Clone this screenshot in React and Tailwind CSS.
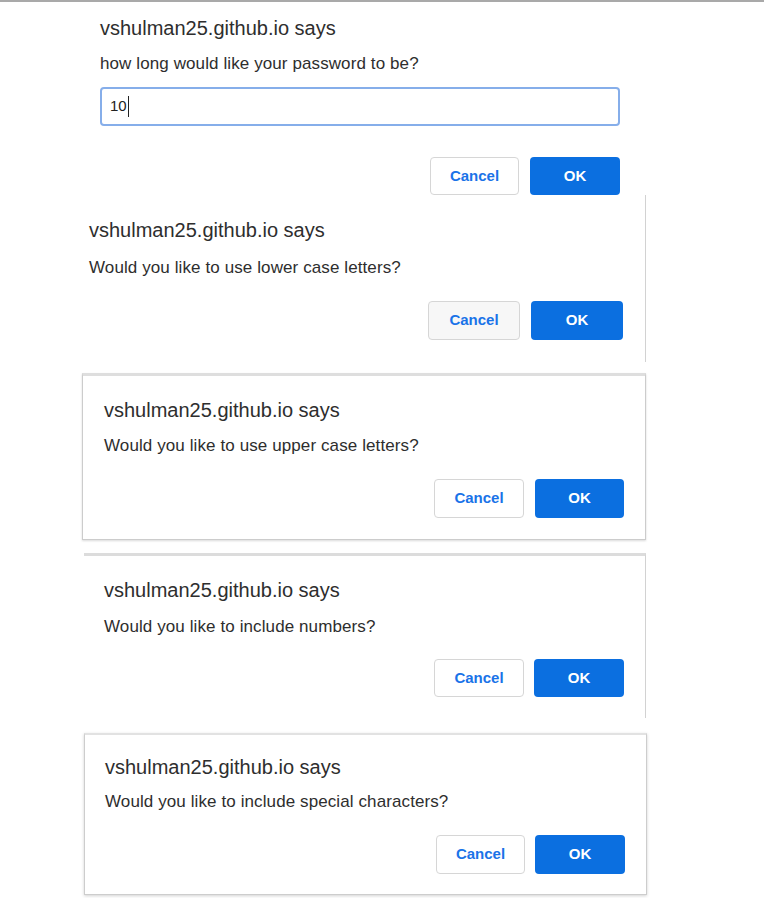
const prompts = [
  {
    box: 'ml-[60px] w-[586px] h-[167px] border-r border-r-[#d2d2d2] pl-[29px] pr-[22px] pt-[23px]',
    message: 'Would you like to use lower case letters?',
    msgGap: 'mt-[16px]',
    btnTop: 'mt-[23px]',
    btnGap: 'gap-[11px]',
    cancel: 'w-[92px] h-[39px] bg-[#f7f7f7]',
    ok: 'w-[92px] h-[39px]',
  },
  {
    box: 'mt-[11px] ml-[82px] w-[564px] h-[167px] border border-[#cccccc] border-t-[3px] border-t-[#dedede] pl-[21px] pr-[21px] pt-[22px] shadow-[0_1px_2px_rgba(0,0,0,0.15)]',
    message: 'Would you like to use upper case letters?',
    msgGap: 'mt-[14px]',
    btnTop: 'mt-[23px]',
    btnGap: 'gap-[11px]',
    cancel: 'w-[90px] h-[39px] bg-white',
    ok: 'w-[89px] h-[39px]',
  },
  {
    box: 'mt-[13px] ml-[84px] w-[562px] h-[165px] border-t-[3px] border-t-[#dcdcdc] border-r border-r-[#d2d2d2] pl-[20px] pr-[21px] pt-[22px]',
    message: 'Would you like to include numbers?',
    msgGap: 'mt-[15px]',
    btnTop: 'mt-[22px]',
    btnGap: 'gap-[10px]',
    cancel: 'w-[90px] h-[38px] bg-white',
    ok: 'w-[90px] h-[38px]',
  },
  {
    box: 'mt-[15px] ml-[84px] w-[563px] h-[162px] border border-[#cdcdcd] border-t-2 border-t-[#e2e2e2] pl-[20px] pr-[21px] pt-[20px] shadow-[0_1px_3px_rgba(0,0,0,0.18)]',
    message: 'Would you like to include special characters?',
    msgGap: 'mt-[13px]',
    btnTop: 'mt-[23px]',
    btnGap: 'gap-[10px]',
    cancel: 'w-[89px] h-[39px] bg-white',
    ok: 'w-[90px] h-[39px]',
  },
]

function Buttons({ gap, cancel, ok }) {
  return (
    <div className={`flex justify-end ${gap}`}>
      <button
        className={`${cancel} rounded-[4px] border border-[#d6d6d6] text-[15px] font-bold text-[#1a73e8]`}
      >
        Cancel
      </button>
      <button className={`${ok} rounded-[4px] bg-[#0b6fe0] text-[15px] font-bold text-white`}>
        OK
      </button>
    </div>
  )
}

export default function App() {
  return (
    <div className="h-[898px] w-[764px] overflow-hidden bg-white font-['Liberation_Sans',Arial,sans-serif] text-[#2e2e2e]">
      <div className="h-[2px] bg-[#a9a9a9]" />

      {/* first prompt, with the text field */}
      <div className="ml-[100px] w-[520px] pt-[14px]">
        <h2 className="text-[20px] leading-[24px]">vshulman25.github.io says</h2>
        <p className="mt-[14px] text-[17px] leading-[20px] tracking-[0.1px]">how long would like your password to be?</p>
        <div className="mt-[13px] flex h-[39px] items-center rounded-[4px] border-2 border-[#86aeea] pl-[8px] text-[15px] text-[#222222]">
          10
          <span className="ml-px h-[21px] w-px bg-[#222222]" />
        </div>
        <div className="mt-[31px]">
          <Buttons gap="gap-[11px]" cancel="w-[89px] h-[38px] bg-white" ok="w-[90px] h-[38px]" />
        </div>
      </div>

      {prompts.map((p, idx) => (
        <div key={idx} className={p.box}>
          <h2 className="text-[20px] leading-[24px]">vshulman25.github.io says</h2>
          <p className={`${p.msgGap} text-[17px] leading-[20px] tracking-[0.1px]`}>{p.message}</p>
          <div className={p.btnTop}>
            <Buttons gap={p.btnGap} cancel={p.cancel} ok={p.ok} />
          </div>
        </div>
      ))}
    </div>
  )
}
